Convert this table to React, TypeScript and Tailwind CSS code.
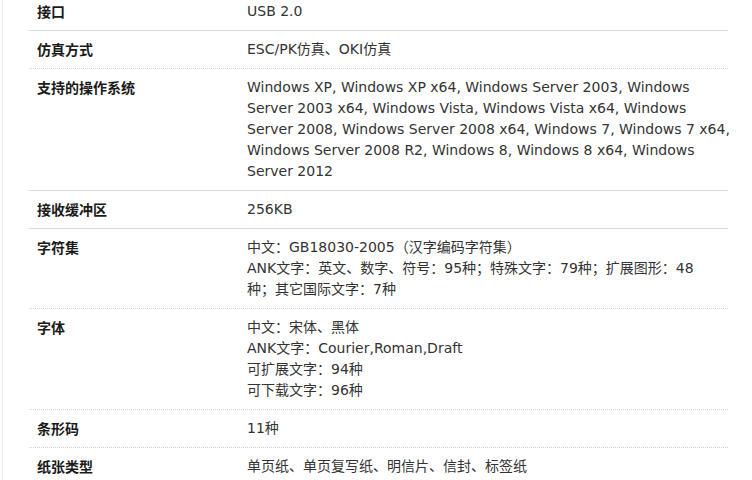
const rows: { label: string; lines: string[]; border: "solid" | "dotted" | "none" }[] = [
  { label: "接口", lines: ["USB 2.0"], border: "solid" },
  { label: "仿真方式", lines: ["ESC/PK仿真、OKI仿真"], border: "dotted" },
  {
    label: "支持的操作系统",
    lines: [
      "Windows XP, Windows XP x64, Windows Server 2003, Windows",
      "Server 2003 x64, Windows Vista, Windows Vista x64, Windows",
      "Server 2008, Windows Server 2008 x64, Windows 7, Windows 7 x64,",
      "Windows Server 2008 R2, Windows 8, Windows 8 x64, Windows",
      "Server 2012",
    ],
    border: "solid",
  },
  { label: "接收缓冲区", lines: ["256KB"], border: "solid" },
  {
    label: "字符集",
    lines: [
      "中文：GB18030-2005（汉字编码字符集）",
      "ANK文字：英文、数字、符号：95种；特殊文字：79种；扩展图形：48",
      "种；其它国际文字：7种",
    ],
    border: "dotted",
  },
  {
    label: "字体",
    lines: ["中文：宋体、黑体", "ANK文字：Courier,Roman,Draft", "可扩展文字：94种", "可下载文字：96种"],
    border: "dotted",
  },
  { label: "条形码", lines: ["11种"], border: "dotted" },
  { label: "纸张类型", lines: ["单页纸、单页复写纸、明信片、信封、标签纸"], border: "none" },
];

export default function App() {
  return (
    <div
      className="h-[480px] w-[752px] overflow-hidden bg-white"
      style={{ fontFamily: '"DejaVu Sans", "Noto Sans CJK SC", sans-serif' }}
    >
      <div className="ml-[2px] min-h-[490px] border-l border-[#ececec] pl-[26px] pr-[24px]">
        <div className="-mt-[7px]">
          {rows.map((r) => (
            <div
              key={r.label}
              className={
                r.border === "solid"
                  ? "flex border-b-[1.5px] border-solid border-[#dadada]"
                  : r.border === "dotted"
                  ? "flex border-b-[1.5px] border-dotted border-[#d4d4d4]"
                  : "flex"
              }
            >
              <div
                className="w-[210px] shrink-0 px-2 py-2 text-[14px] font-bold text-[#1a1a1a]"
                style={{ fontFamily: '"Noto Sans CJK SC", sans-serif' }}
              >
                <div className="h-[21px] leading-[21px]">{r.label}</div>
              </div>
              <div className="flex-1 px-2 py-2 text-[14px] text-[#333333]">
                {r.lines.map((l, i) => (
                  <div key={i} className="h-[21px] whitespace-nowrap leading-[21px]">
                    {l}
                  </div>
                ))}
              </div>
            </div>
          ))}
        </div>
      </div>
    </div>
  );
}
